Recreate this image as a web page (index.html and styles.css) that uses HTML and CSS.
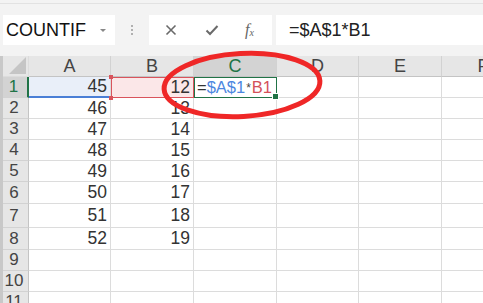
FILE: index.html
```html
<!DOCTYPE html>
<html lang="en">
<head>
  <meta charset="UTF-8" />
  <title>COUNTIF</title>
  <link rel="stylesheet" href="styles.css">
</head>
<body>
  <div class="toolbar">
    <div class="name-box">COUNTIF<span class="caret"></span></div>
    <div class="sep"><i></i><i></i><i></i></div>
    <div class="fx-box">
      <svg class="ico" width="12" height="12" viewBox="0 0 12 12"><path d="M1.5 1.5 L10.5 10.5 M10.5 1.5 L1.5 10.5" stroke="#6a6a6a" stroke-width="1.6" fill="none"/></svg>
      <svg class="ico" width="14" height="12" viewBox="0 0 14 12"><path d="M1.5 6.5 L5 10 L12.5 2" stroke="#6a6a6a" stroke-width="2" fill="none"/></svg>
      <span class="fx">f<sub>x</sub></span>
    </div>
    <div class="formula">=$A$1*B1</div>
  </div>

  <div class="sheet">
    <!-- header row -->
    <div class="corner"><span class="tri"></span></div>
    <div class="colh">A</div>
    <div class="colh">B</div>
    <div class="colh active">C</div>
    <div class="colh">D</div>
    <div class="colh">E</div>
    <div class="colh">F</div>

    <!-- row 1 -->
    <div class="rowh active">1</div>
    <div class="cell num ref-a">45</div>
    <div class="cell num ref-b">12</div>
    <div class="cell edit">=<span class="c-a">$A$1</span><span class="star">*</span><span class="c-b">B1</span></div>
    <div class="cell"></div><div class="cell"></div><div class="cell"></div>

    <div class="rowh">2</div><div class="cell num">46</div><div class="cell num">13</div><div class="cell"></div><div class="cell"></div><div class="cell"></div><div class="cell"></div>
    <div class="rowh">3</div><div class="cell num">47</div><div class="cell num">14</div><div class="cell"></div><div class="cell"></div><div class="cell"></div><div class="cell"></div>
    <div class="rowh">4</div><div class="cell num">48</div><div class="cell num">15</div><div class="cell"></div><div class="cell"></div><div class="cell"></div><div class="cell"></div>
    <div class="rowh">5</div><div class="cell num">49</div><div class="cell num">16</div><div class="cell"></div><div class="cell"></div><div class="cell"></div><div class="cell"></div>
    <div class="rowh">6</div><div class="cell num">50</div><div class="cell num">17</div><div class="cell"></div><div class="cell"></div><div class="cell"></div><div class="cell"></div>
    <div class="rowh">7</div><div class="cell num">51</div><div class="cell num">18</div><div class="cell"></div><div class="cell"></div><div class="cell"></div><div class="cell"></div>
    <div class="rowh">8</div><div class="cell num">52</div><div class="cell num">19</div><div class="cell"></div><div class="cell"></div><div class="cell"></div><div class="cell"></div>
    <div class="rowh">9</div><div class="cell"></div><div class="cell"></div><div class="cell"></div><div class="cell"></div><div class="cell"></div><div class="cell"></div>
    <div class="rowh">10</div><div class="cell"></div><div class="cell"></div><div class="cell"></div><div class="cell"></div><div class="cell"></div><div class="cell"></div>
    <div class="rowh">11</div><div class="cell"></div><div class="cell"></div><div class="cell"></div><div class="cell"></div><div class="cell"></div><div class="cell"></div>
  </div>

  <!-- red hand-drawn annotation -->
  <svg class="mark" width="483" height="303" viewBox="0 0 483 303">
    <ellipse cx="242" cy="85" rx="78" ry="31.5" transform="rotate(-3 242 85)" fill="none" stroke="#ef2727" stroke-width="5"/>
  </svg>
</body>
</html>
```

FILE: styles.css
```css
/* spreadsheet mockup */
body { margin: 0; width: 483px; height: 303px; overflow: hidden; background: #f3f3f3; font-family: "Liberation Sans", Arial, sans-serif; color: #333; position: relative; }

.toolbar { margin-top: 3px; border-top: 1px solid #e2e2e2; height: 53px; box-sizing: border-box; padding-top: 11px; display: flex; align-items: flex-start; }
.name-box { margin-left: 3px; width: 112px; height: 30px; background: #fff; display: flex; align-items: center; padding-left: 3px; box-sizing: border-box; font-size: 18px; color: #111; }
.caret { margin-left: auto; margin-right: 9px; width: 0; height: 0; border-left: 3px solid transparent; border-right: 3px solid transparent; border-top: 3px solid #888; }
.sep { width: 34px; height: 30px; display: flex; flex-direction: column; align-items: center; justify-content: center; gap: 2px; }
.sep i { width: 2px; height: 2px; background: #b0b0b0; display: block; }
.fx-box { width: 123px; height: 30px; background: #fff; display: flex; align-items: center; padding-left: 16px; box-sizing: border-box; }
.fx-box .ico { margin-right: 28px; }
.fx { font-family: "Liberation Serif", serif; font-style: italic; font-size: 16px; color: #666; margin-left: -2px; }
.fx sub { font-size: 10px; vertical-align: -1px; }
.formula { margin-left: 4px; flex: 1; height: 30px; background: #fff; display: flex; align-items: center; padding-left: 13px; font-size: 18px; color: #222; }

.sheet { display: grid; grid-template-columns: 26px 82px 83px 83px 82px 83px 83px; grid-template-rows: 21px 21px 21px 21px 21px 21px 22px 24px 22px 21px 21px 21px; background: #fff; border-left: 3px solid #c8c8c8; height: 250px; width: max-content; }
.sheet > div { box-sizing: border-box; border-right: 1px solid #dcdcdc; border-bottom: 1px solid #dcdcdc; }

.corner { background: #e6e6e6; position: relative; }
.tri { position: absolute; right: 2px; bottom: 2px; width: 17px; height: 17px; background: #c5c5c5; clip-path: polygon(100% 0, 100% 100%, 0 100%); }
.colh { background: #e6e6e6; text-align: center; font-size: 18px; line-height: 21px; color: #444; border-right-color: #d2d2d2 !important; border-bottom-color: #c4c4c4 !important; }
.colh.active { background: #d3d3d3; color: #217346; }
.rowh { background: #e6e6e6; font-size: 17px; color: #444; padding-right: 3px; border-right-color: #c4c4c4 !important; border-bottom-color: #d2d2d2 !important; display: flex; align-items: center; justify-content: center; }
.rowh.active { background: #d3d3d3; color: #217346; border-right: 2px solid #217346 !important; }

.cell { font-size: 17.5px; display: flex; align-items: center; }
.num { justify-content: flex-end; padding-right: 3px; }

.ref-a { background: #e9eff9; border-bottom: 2px solid #4a7fd6 !important; }
.ref-b { background: #fbe7e8; border: 1.5px solid #d9545c !important; position: relative; }
.ref-b::before, .ref-b::after { content: ""; position: absolute; width: 4px; height: 4px; background: #d9545c; left: -3px; }
.ref-b::before { top: -3px; }
.ref-b::after { bottom: -3px; }

.edit { border: 1.5px solid #217346 !important; position: relative; font-size: 16.5px; padding-left: 2px; color: #333; }
.edit::after { content: ""; position: absolute; right: -3px; bottom: -3px; width: 5px; height: 5px; background: #217346; border: 1px solid #fff; }
.c-a { color: #4c87e0; }
.c-b { color: #d4515a; }
.star { font-size: 12px; margin: 0 1px; color: #444; }

.mark { position: absolute; left: 0; top: 0; pointer-events: none; }
```
